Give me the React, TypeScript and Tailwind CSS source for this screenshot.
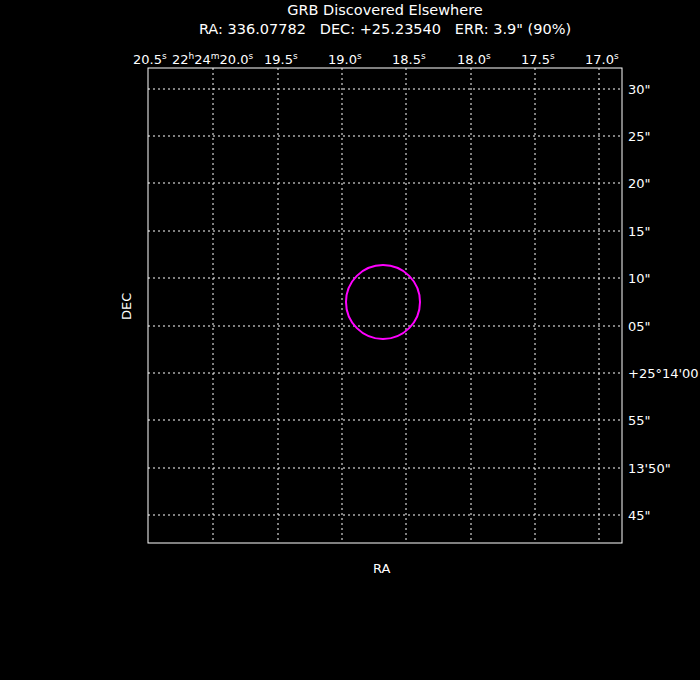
export default function App() {
  const xs = [213, 278, 342, 406, 471, 535, 599]
  const ys = [89, 136, 183, 231, 278, 326, 373, 420, 468, 515]
  const top: [number, string, string][] = [
    [278, "19.5", "s"],
    [342, "19.0", "s"],
    [406, "18.5", "s"],
    [471, "18.0", "s"],
    [535, "17.5", "s"],
    [599, "17.0", "s"],
  ]
  const right = ['30"', '25"', '20"', '15"', '10"', '05"', "", '55"', "", '45"']
  return (
    <div className="w-[700px] h-[680px] bg-black" style={{ fontFamily: '"DejaVu Sans", sans-serif' }}>
      <svg width="700" height="680" className="block">
        <g fill="#fff" fontSize="14.5" textAnchor="middle">
          <text x="385" y="15">GRB Discovered Elsewhere</text>
          <text x="385" y="34" style={{ whiteSpace: "pre" }}>{'RA: 336.07782   DEC: +25.23540   ERR: 3.9" (90%)'}</text>
        </g>
        {xs.map((x) => (
          <line key={x} x1={x} y1={68} x2={x} y2={543} stroke="#fff" strokeDasharray="2 3" />
        ))}
        {ys.map((y) => (
          <line key={y} x1={148} y1={y} x2={622} y2={y} stroke="#fff" strokeDasharray="2 3" />
        ))}
        <rect x="148" y="68" width="474" height="475" fill="none" stroke="#fff" />
        <circle cx="383" cy="302" r="37" fill="none" stroke="#ff00ff" strokeWidth="2" />
        <g fill="#fff" fontSize="13">
          <text x="133" y="64">20.5<tspan fontSize="9" dy="-5">s</tspan></text>
          <text x="172" y="64">22<tspan fontSize="9" dy="-5">h</tspan><tspan dy="5">24</tspan><tspan fontSize="9" dy="-5">m</tspan><tspan dy="5">20.0</tspan><tspan fontSize="9" dy="-5">s</tspan></text>
          {top.map(([x, t, u]) => (
            <text key={x} x={x - 14} y="64">{t}<tspan fontSize="9" dy="-5">{u}</tspan></text>
          ))}
          {right.map((t, i) =>
            t ? (
              <text key={i} x="628" y={ys[i] + 5}>{t}</text>
            ) : null
          )}
          <text x="628" y={378}>+25°14'00</text>
          <text x="628" y={473}>13'50"</text>
          <text x="373" y="573">RA</text>
          <text x="131" y="320" transform="rotate(-90 131 320)">DEC</text>
        </g>
      </svg>
    </div>
  )
}
